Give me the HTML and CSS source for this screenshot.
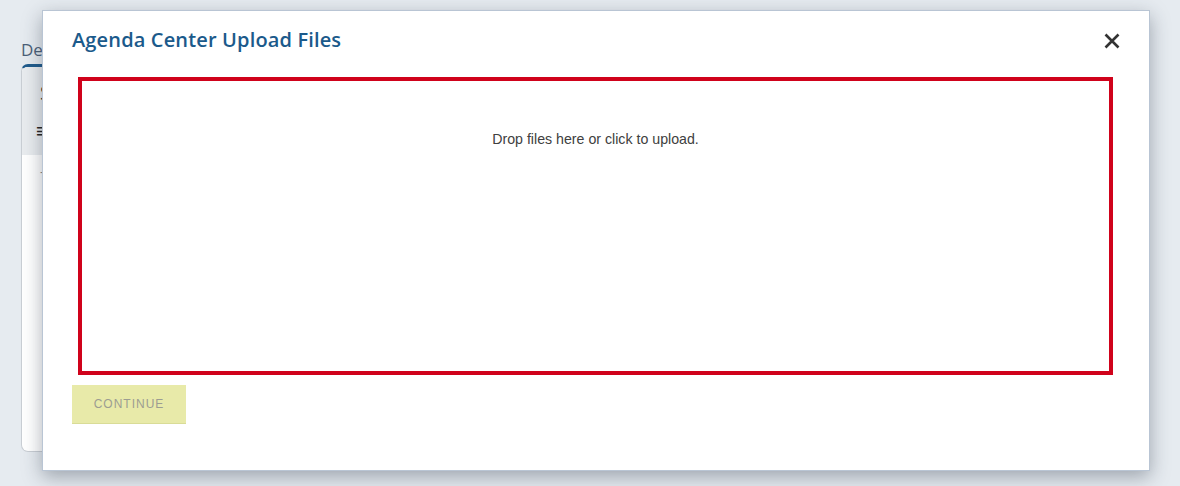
FILE: index.html
```html
<!DOCTYPE html>
<html lang="en">
<head>
<meta charset="utf-8">
<title>Agenda Center Upload Files</title>
<link rel="stylesheet" href="styles.css">
</head>
<body>
<div class="page">
  <div class="page-label">Department</div>
  <div class="bg-card">
    <div class="bg-card-head">
      <div class="bg-card-title">Sections</div>
      <div class="bg-card-menu">&#8801;</div>
    </div>
    <div class="bg-card-body">
      <div class="bg-card-dash">-</div>
    </div>
  </div>
</div>

<div class="modal" role="dialog" aria-labelledby="modal-title">
  <div class="modal-header">
    <h2 class="modal-title" id="modal-title">Agenda Center Upload Files</h2>
    <button class="modal-close" aria-label="Close">
      <svg width="16" height="16" viewBox="0 0 16 16" aria-hidden="true">
        <path d="M1.5 1.5 L14.5 14.5 M14.5 1.5 L1.5 14.5" stroke="#333" stroke-width="2.6" stroke-linecap="butt" fill="none"/>
      </svg>
    </button>
  </div>
  <div class="dropzone">
    <div class="dropzone-msg">Drop files here or click to upload.</div>
  </div>
  <div class="modal-actions">
    <button class="btn-continue" disabled>CONTINUE</button>
  </div>
</div>
</body>
</html>
```

FILE: styles.css
```css
html, body {
  margin: 0;
  padding: 0;
}
body {
  width: 1180px;
  height: 486px;
  background: #e6ebf0;
  overflow: hidden;
  position: relative;
  font-family: "Liberation Sans", Arial, sans-serif;
}

/* background page (mostly hidden behind the dialog) */
.page {
  width: 21px;
  height: 446px;
  padding: 40px 0 0 21px;
  overflow: hidden;
}
.page-label {
  font-family: "Open Sans", "Liberation Sans", sans-serif;
  font-size: 17px;
  line-height: 20px;
  color: #4b5f78;
  white-space: nowrap;
  margin-bottom: 4px;
}
.bg-card {
  width: 300px;
  height: 384px;
  background: #ffffff;
  border: 1px solid #c9ced4;
  border-top: 3px solid #1f5b8c;
  border-radius: 7px;
  overflow: hidden;
}
.bg-card-head {
  background: #e9ecef;
  height: 88px;
  padding: 14px 0 0 18px;
  box-sizing: border-box;
}
.bg-card-title {
  font-family: "Open Sans", "Liberation Sans", sans-serif;
  font-size: 20px;
  line-height: 24px;
  color: #333;
  white-space: nowrap;
}
.bg-card-menu {
  font-size: 20px;
  line-height: 20px;
  margin-top: 16px;
  margin-left: -4px;
  color: #222;
}
.bg-card-body {
  padding: 10px 0 0 18px;
}
.bg-card-dash {
  font-size: 12px;
  color: #888;
}

/* modal */
.modal {
  position: absolute;
  left: 42px;
  top: 10px;
  width: 1108px;
  height: 461px;
  box-sizing: border-box;
  background: #ffffff;
  border: 1px solid #b9c5d4;
  box-shadow: 0 6px 18px rgba(40, 50, 65, 0.38);
  padding: 16px 29px 0 29px;
}
.modal-header {
  display: flex;
  align-items: center;
  justify-content: space-between;
  height: 26px;
  margin-bottom: 24px;
}
.modal-title {
  margin: 0;
  font-family: "Open Sans", "Liberation Sans", sans-serif;
  font-weight: 600;
  font-size: 20px;
  line-height: 26px;
  color: #1b5a8b;
  letter-spacing: 0.15px;
}
.modal-close {
  background: none;
  border: 0;
  padding: 0;
  width: 16px;
  height: 16px;
  margin-top: 1px;
  display: flex;
  cursor: pointer;
}

.dropzone {
  margin: 0 7px 0 6px;
  height: 298px;
  box-sizing: border-box;
  border: 4px solid #d0021b;
  padding-top: 50px;
  text-align: center;
  cursor: pointer;
}
.dropzone-msg {
  font-size: 14.2px;
  line-height: 16px;
  color: #404040;
}

.modal-actions {
  margin-top: 10px;
}
.btn-continue {
  width: 114px;
  height: 39px;
  box-sizing: border-box;
  background: #e8eaa9;
  border: 0;
  border-bottom: 1px solid #d9dc97;
  color: #9c9d92;
  font-family: "Liberation Sans", Arial, sans-serif;
  font-size: 12px;
  letter-spacing: 1px;
  padding: 0;
}
```
